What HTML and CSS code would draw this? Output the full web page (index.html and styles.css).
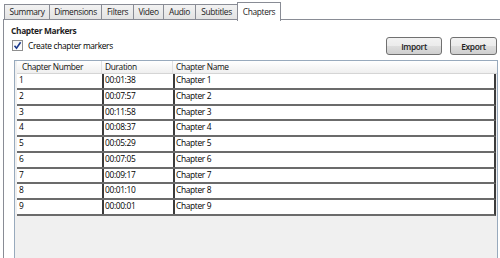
FILE: index.html
```html
<!DOCTYPE html>
<html>
<head>
  <meta charset="utf-8">
  <title>Chapters</title>
  <link rel="stylesheet" href="styles.css">
</head>
<body>
  <ul class="tabs">
    <li class="t-summary">Summary</li>
    <li class="t-dim">Dimensions</li>
    <li class="t-filters">Filters</li>
    <li class="t-video">Video</li>
    <li class="t-audio">Audio</li>
    <li class="t-subs">Subtitles</li>
    <li class="current">Chapters</li>
  </ul>
  <div class="panel">
    <h2>Chapter Markers</h2>
    <div class="options">
      <label class="check">
        <span class="box">
          <svg width="9" height="9" viewBox="0 0 9 9"><path d="M1.5 4.8 L3.5 7.2 L7.6 1.2" fill="none" stroke="#1c3a8c" stroke-width="1.6"/></svg>
        </span>
        Create chapter markers
      </label>
      <div class="buttons">
        <button class="import">Import</button>
        <button class="export">Export</button>
      </div>
    </div>
    <div class="grid">
      <div class="head">
        <div class="c1">Chapter Number</div>
        <div class="c2">Duration</div>
        <div class="c3">Chapter Name</div>
      </div>
      <div class="rows">
        <div class="row"><div class="c1">1</div><div class="c2">00:01:38</div><div class="c3">Chapter 1</div></div>
        <div class="row"><div class="c1">2</div><div class="c2">00:07:57</div><div class="c3">Chapter 2</div></div>
        <div class="row"><div class="c1">3</div><div class="c2">00:11:58</div><div class="c3">Chapter 3</div></div>
        <div class="row"><div class="c1">4</div><div class="c2">00:08:37</div><div class="c3">Chapter 4</div></div>
        <div class="row"><div class="c1">5</div><div class="c2">00:05:29</div><div class="c3">Chapter 5</div></div>
        <div class="row"><div class="c1">6</div><div class="c2">00:07:05</div><div class="c3">Chapter 6</div></div>
        <div class="row"><div class="c1">7</div><div class="c2">00:09:17</div><div class="c3">Chapter 7</div></div>
        <div class="row"><div class="c1">8</div><div class="c2">00:01:10</div><div class="c3">Chapter 8</div></div>
        <div class="row"><div class="c1">9</div><div class="c2">00:00:01</div><div class="c3">Chapter 9</div></div>
      </div>
    </div>
  </div>
</body>
</html>
```

FILE: styles.css
```css
/* Chapters tab of the encoder window */
body {
  font-family: "Open Sans", "Noto Sans", sans-serif;
  font-size: 8.4px;
  letter-spacing: -0.35px;
  color: #000;
  margin: 0;
  padding: 0;
  background-color: #fff;
  overflow: hidden;
  height: 258px;
}
.tabs {
  list-style-type: none;
  margin: 0;
  padding: 4px 0 0 4px;
  display: flex;
  height: 15px;
  position: relative;
  z-index: 1;
}
.tabs li {
  box-sizing: border-box;
  height: 16px;
  line-height: 14px;
  text-align: center;
  border: 1px solid #898c95;
  border-right: none;
  background: linear-gradient(#f2f2f2, #e3e3e3);
  color: #1a1a1a;
}
.tabs .t-summary { width: 45px; }
.tabs .t-dim { width: 52px; }
.tabs .t-filters { width: 32px; }
.tabs .t-video { width: 30px; }
.tabs .t-audio { width: 32px; }
.tabs .t-subs { width: 42px; }
.tabs li.current {
  width: 44px;
  margin-top: -2px;
  height: 19px;
  line-height: 17px;
  background: #fff;
  border-right: 1px solid #898c95;
  border-bottom: none;
}
.panel {
  margin-left: 3px;
  border-left: 1px solid #898c95;
  border-top: 1px solid #898c95;
  height: 240px;
  padding: 0 0 0 7px;
}
.panel h2 {
  font-size: 8.4px;
  font-weight: bold;
  margin: 0;
  padding-top: 5px;
  line-height: 11px;
  color: #1e1e1e;
}
.options {
  display: flex;
  justify-content: space-between;
  align-items: flex-start;
  height: 24px;
}
.check {
  display: flex;
  align-items: center;
  gap: 5px;
  margin-top: 4px;
  margin-left: 1px;
  line-height: 11px;
}
.box {
  box-sizing: border-box;
  width: 11px;
  height: 11px;
  border: 1px solid #8f8f8f;
  background: linear-gradient(#f4f4f4, #fff);
  display: flex;
  align-items: center;
  justify-content: center;
}
.buttons {
  display: flex;
  gap: 8px;
  margin-top: 1px;
  margin-right: 3px;
}
.buttons button {
  box-sizing: border-box;
  height: 18px;
  font-family: inherit;
  font-size: 8.4px;
  font-weight: 600;
  letter-spacing: -0.35px;
  color: #222;
  border: 1px solid #707070;
  border-radius: 3px;
  background: linear-gradient(#f2f2f2 0%, #ebebeb 50%, #dddddd 51%, #cfcfcf 100%);
  padding: 0;
}
.buttons .import {
  width: 56px;
}
.buttons .export {
  width: 47px;
}
.grid {
  box-sizing: border-box;
  margin-left: 3px;
  margin-right: 2px;
  height: 210px;
  border: 1px solid #98aabd;
  border-bottom: none;
  background-color: #f0f0f0;
}
.head {
  display: flex;
  height: 12px;
  line-height: 12px;
  margin-left: 2px;
  background: linear-gradient(#ffffff, #efefef);
  border-bottom: 1px solid #d5d5d5;
  color: #111;
}
.head .c1 {
  width: 85px;
  padding-left: 5px;
  border-right: 1px solid #e0e0e0;
}
.head .c2 {
  width: 71px;
  padding-left: 3px;
  border-right: 1px solid #e0e0e0;
}
.head .c3 {
  flex: 1;
  padding-left: 3px;
}
.head div,
.row div {
  box-sizing: border-box;
}
.rows {
  margin-left: 2px;
  margin-right: 1px;
}
.row {
  box-sizing: border-box;
  display: flex;
  height: 15.75px;
  line-height: 12px;
  background-color: #fff;
  border-bottom: 2px solid #6b6b6b;
  border-right: 2px solid #3c3c3c;
}
.row .c1 {
  width: 87px;
  padding-left: 2px;
  border-right: 2px solid #3c3c3c;
}
.row .c2 {
  width: 71px;
  padding-left: 1px;
  border-right: 2px solid #3c3c3c;
}
.row .c3 {
  flex: 1;
  padding-left: 1px;
}
```
